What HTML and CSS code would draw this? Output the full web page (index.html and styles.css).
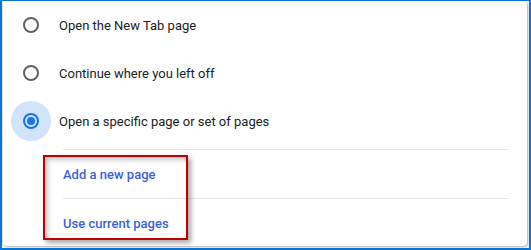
FILE: index.html
```html
<!DOCTYPE html>
<html>
<head>
<meta charset="utf-8">
<link rel="stylesheet" href="styles.css">
</head>
<body>
<div class="frame">
  <div class="card">
    <div class="option">
      <span class="radio-wrap"><span class="radio"></span></span>
      <span class="label">Open the New Tab page</span>
    </div>
    <div class="option">
      <span class="radio-wrap"><span class="radio"></span></span>
      <span class="label">Continue where you left off</span>
    </div>
    <div class="option">
      <span class="radio-wrap selected"><span class="radio checked"></span></span>
      <span class="label">Open a specific page or set of pages</span>
    </div>
    <div class="pages">
      <div class="link-row"><span class="link">Add a new page</span></div>
      <div class="link-row"><span class="link">Use current pages</span></div>
    </div>
  </div>
  <div class="highlight"></div>
</div>
</body>
</html>
```
FILE: styles.css
```css
* { box-sizing: border-box; }
html, body { margin: 0; padding: 0; }
body {
  font-family: Roboto, "Liberation Sans", sans-serif;
  background: #fff;
}
.frame {
  position: relative;
  width: 531px;
  height: 250px;
  border-style: solid;
  border-color: #0a74d6;
  border-width: 1px 2px 2px 2px;
  background: #f6f6f6;
  padding: 0 2px 2px 0;
}
.card {
  height: 100%;
  background: #fff;
  border-radius: 0 4px 4px 4px;
  box-shadow: 1px 1px 2px rgba(0,0,0,0.28), -1px 0 0 #e4e4e4;
  margin-left: 1px;
  padding-right: 18px;
}
.option {
  display: flex;
  align-items: center;
  height: 48px;
  padding-left: 8px;
}
.radio-wrap {
  width: 40px;
  height: 40px;
  border-radius: 50%;
  display: flex;
  align-items: center;
  justify-content: center;
  flex: none;
}
.radio-wrap.selected { background: #d2e3fc; }
.radio {
  width: 16px;
  height: 16px;
  border: 2px solid #5f6368;
  border-radius: 50%;
  display: flex;
  align-items: center;
  justify-content: center;
}
.radio.checked { border-color: #1a73e8; }
.radio.checked::after {
  content: "";
  width: 8px;
  height: 8px;
  border-radius: 50%;
  background: #1a73e8;
}
.label {
  margin-left: 8px;
  font-size: 13px;
  color: #202124;
}
.pages {
  margin-top: 4px;
  margin-left: 60px;
}
.link-row {
  height: 49px;
  border-top: 1px solid #e8e8e8;
  display: flex;
  align-items: center;
}
.link {
  font-size: 13px;
  font-weight: 500;
  color: #3c5fd8;
}
.highlight {
  position: absolute;
  left: 41px;
  top: 154px;
  width: 145px;
  height: 85px;
  border: 2px solid #c00000;
  box-shadow: 3px 3px 5px rgba(0,0,0,0.35), inset 3px 3px 5px rgba(0,0,0,0.22);
}
```
